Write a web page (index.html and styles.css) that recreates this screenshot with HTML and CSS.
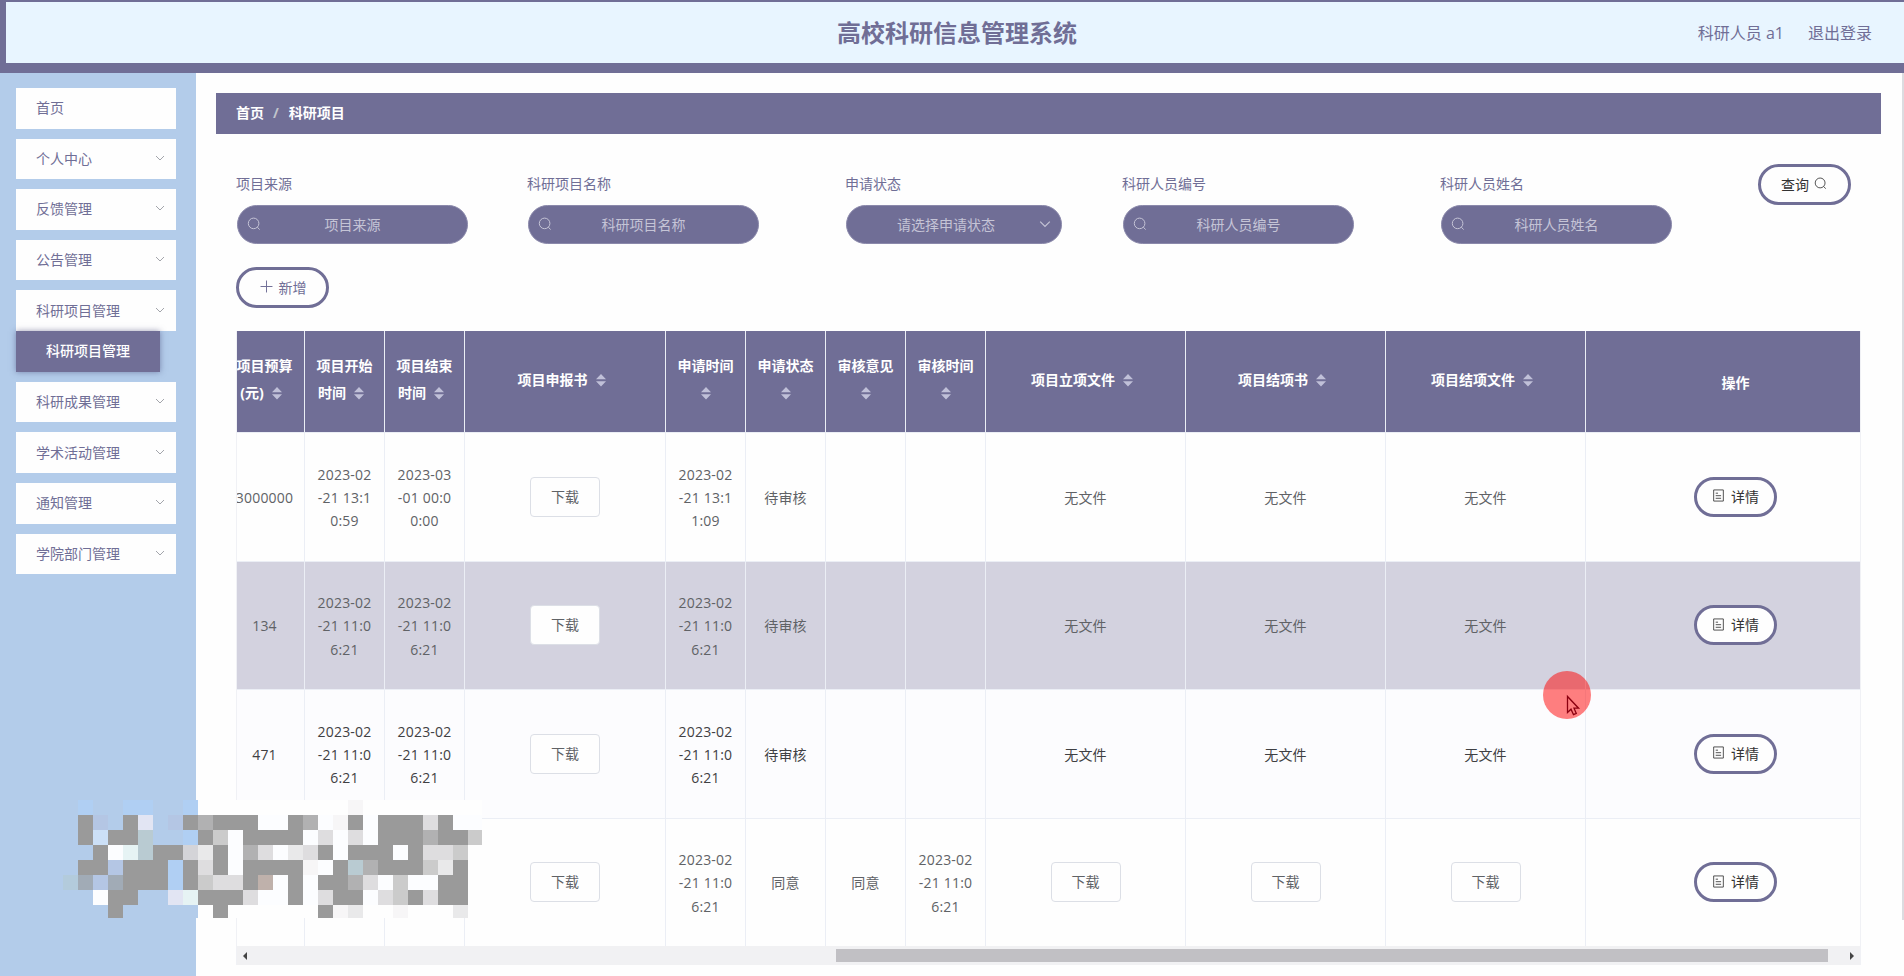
FILE: index.html
```html
<!DOCTYPE html>
<html lang="zh-CN">
<head>
    <meta charset="UTF-8">
    <title>高校科研信息管理系统</title>
    <link rel="stylesheet" href="styles.css">
</head>
<body>
    <!-- icons -->
    <svg class="sprite">
        <symbol id="search" viewBox="0 0 14 14"><circle cx="6.6" cy="6.4" r="5.3"/><path d="M10.4 10.2L12.6 12.6"/></symbol>
        <symbol id="down" viewBox="0 0 10 10"><path d="M1 3L5 7L9 3"/></symbol>
        <symbol id="plus" viewBox="0 0 12 12"><path d="M6 .5V11.5M.5 6H11.5"/></symbol>
        <symbol id="doc" viewBox="0 0 12 14"><path d="M.8 1H11.2V13H.8ZM3 4.5H5.5M3 7.2H8.8M3 10H8.8"/></symbol>
        <symbol id="sort" viewBox="0 0 10 13"><path d="M5 0L10 5.3H0ZM0 7.3H10L5 12.6Z"/></symbol>
    </svg>

    <header class="header">
        <h1 class="title">高校科研信息管理系统</h1>
        <div class="user"><span>科研人员 a1</span><span>退出登录</span></div>
    </header>

    <div class="container">
        <nav class="sidebar">
            <div class="menu-item">首页</div>
            <div class="menu-item">个人中心<svg class="arrow"><use href="#down"/></svg></div>
            <div class="menu-item">反馈管理<svg class="arrow"><use href="#down"/></svg></div>
            <div class="menu-item">公告管理<svg class="arrow"><use href="#down"/></svg></div>
            <div class="menu-item open">科研项目管理<svg class="arrow"><use href="#down"/></svg></div>
            <div class="submenu-item">科研项目管理</div>
            <div class="menu-item">科研成果管理<svg class="arrow"><use href="#down"/></svg></div>
            <div class="menu-item">学术活动管理<svg class="arrow"><use href="#down"/></svg></div>
            <div class="menu-item">通知管理<svg class="arrow"><use href="#down"/></svg></div>
            <div class="menu-item">学院部门管理<svg class="arrow"><use href="#down"/></svg></div>
        </nav>

        <main class="main">
            <div class="breadcrumb"><b>首页</b><span class="slash">/</span><b>科研项目</b></div>

            <div class="filters">
                <div class="field">
                    <label>项目来源</label>
                    <div class="input"><svg class="search"><use href="#search"/></svg>项目来源</div>
                </div>
                <div class="field">
                    <label>科研项目名称</label>
                    <div class="input"><svg class="search"><use href="#search"/></svg>科研项目名称</div>
                </div>
                <div class="field">
                    <label>申请状态</label>
                    <div class="input select">请选择申请状态<svg class="caret"><use href="#down"/></svg></div>
                </div>
                <div class="field">
                    <label>科研人员编号</label>
                    <div class="input"><svg class="search"><use href="#search"/></svg>科研人员编号</div>
                </div>
                <div class="field">
                    <label>科研人员姓名</label>
                    <div class="input"><svg class="search"><use href="#search"/></svg>科研人员姓名</div>
                </div>
                <button class="pill query">查询<svg class="icon"><use href="#search"/></svg></button>
            </div>

            <button class="pill add"><svg class="icon"><use href="#plus"/></svg>新增</button>

            <div class="table-wrap">
                <table class="table">
                    <colgroup>
                        <col class="w80"><col class="w80"><col class="w80"><col class="w201">
                        <col class="w80"><col class="w80"><col class="w80"><col class="w80">
                        <col class="w200"><col class="w200"><col class="w200"><col class="w300">
                    </colgroup>
                    <thead>
                        <tr>
                            <th>项目预算<br>(元)<svg class="sort"><use href="#sort"/></svg></th>
                            <th>项目开始<br>时间<svg class="sort"><use href="#sort"/></svg></th>
                            <th>项目结束<br>时间<svg class="sort"><use href="#sort"/></svg></th>
                            <th>项目申报书<svg class="sort"><use href="#sort"/></svg></th>
                            <th>申请时间<br><svg class="sort alone"><use href="#sort"/></svg></th>
                            <th>申请状态<br><svg class="sort alone"><use href="#sort"/></svg></th>
                            <th>审核意见<br><svg class="sort alone"><use href="#sort"/></svg></th>
                            <th>审核时间<br><svg class="sort alone"><use href="#sort"/></svg></th>
                            <th>项目立项文件<svg class="sort"><use href="#sort"/></svg></th>
                            <th>项目结项书<svg class="sort"><use href="#sort"/></svg></th>
                            <th>项目结项文件<svg class="sort"><use href="#sort"/></svg></th>
                            <th class="action">操作</th>
                        </tr>
                    </thead>
                    <tbody>
                        <tr class="r1">
                            <td>3000000</td>
                            <td>2023-02<br>-21 13:1<br>0:59</td>
                            <td>2023-03<br>-01 00:0<br>0:00</td>
                            <td><button class="download">下载</button></td>
                            <td>2023-02<br>-21 13:1<br>1:09</td>
                            <td>待审核</td>
                            <td></td>
                            <td></td>
                            <td>无文件</td>
                            <td>无文件</td>
                            <td>无文件</td>
                            <td><button class="pill detail"><svg class="icon"><use href="#doc"/></svg>详情</button></td>
                        </tr>
                        <tr class="r2 hover">
                            <td>134</td>
                            <td>2023-02<br>-21 11:0<br>6:21</td>
                            <td>2023-02<br>-21 11:0<br>6:21</td>
                            <td><button class="download">下载</button></td>
                            <td>2023-02<br>-21 11:0<br>6:21</td>
                            <td>待审核</td>
                            <td></td>
                            <td></td>
                            <td>无文件</td>
                            <td>无文件</td>
                            <td>无文件</td>
                            <td><button class="pill detail"><svg class="icon"><use href="#doc"/></svg>详情</button></td>
                        </tr>
                        <tr class="r3">
                            <td>471</td>
                            <td>2023-02<br>-21 11:0<br>6:21</td>
                            <td>2023-02<br>-21 11:0<br>6:21</td>
                            <td><button class="download">下载</button></td>
                            <td>2023-02<br>-21 11:0<br>6:21</td>
                            <td>待审核</td>
                            <td></td>
                            <td></td>
                            <td>无文件</td>
                            <td>无文件</td>
                            <td>无文件</td>
                            <td><button class="pill detail"><svg class="icon"><use href="#doc"/></svg>详情</button></td>
                        </tr>
                        <tr class="r4">
                            <td></td>
                            <td></td>
                            <td></td>
                            <td><button class="download">下载</button></td>
                            <td>2023-02<br>-21 11:0<br>6:21</td>
                            <td>同意</td>
                            <td>同意</td>
                            <td>2023-02<br>-21 11:0<br>6:21</td>
                            <td><button class="download">下载</button></td>
                            <td><button class="download">下载</button></td>
                            <td><button class="download">下载</button></td>
                            <td><button class="pill detail"><svg class="icon"><use href="#doc"/></svg>详情</button></td>
                        </tr>
                    </tbody>
                </table>
                <div class="scrollbar">
                    <svg class="sb-arrow" viewBox="0 0 4 8"><path d="M4 0V8L0 4Z"/></svg>
                    <div class="thumb"></div>
                    <svg class="sb-arrow" viewBox="0 0 4 8"><path d="M0 0V8L4 4Z"/></svg>
                </div>
            </div>
        </main>
        <div class="page-scroll"></div>
    </div>

    <div class="mosaic" id="mosaic"></div>

    <div class="pointer">
        <svg viewBox="0 0 48 48"><path d="M24.5 25.5V41.5L28 38.2L30.5 43.7L33.3 42.4L31 37.2H35.6Z"/></svg>
    </div>

    <script src="mosaic.js"></script>
</body>
</html>
```
FILE: styles.css
```css
* {
    box-sizing: border-box;
}
body {
    margin: 0;
    height: 976px;
    overflow: hidden;
    position: relative;
    background: #fefefe;
    color: #606266;
    font-family: "Open Sans", "Noto Sans CJK SC", sans-serif;
    font-size: 14px;
}
button {
    font-family: inherit;
    font-size: 14px;
    padding: 0 0 2px;
}
svg {
    fill: none;
    stroke: currentColor;
    flex: none;
}
.sprite {
    display: none;
}

/* header */
.header {
    height: 73px;
    border: solid #706e96;
    border-width: 2px 0 10px 6px;
    background: #e8f5ff;
    display: grid;
    grid-template-columns: 1fr auto 1fr;
    align-items: center;
    padding: 0 32px 0 36px;
    color: #706e96;
}
.title {
    grid-column: 2;
    margin: 0;
    font-size: 24px;
    line-height: 36px;
}
.user {
    display: flex;
    justify-content: flex-end;
    gap: 24px;
    padding-bottom: 2px;
    font-size: 16px;
}

.container {
    display: flex;
    height: 903px;
}

/* sidebar */
.sidebar {
    width: 196px;
    padding: 15px 20px 0 16px;
    background: #b3ccea;
    color: #706e96;
}
.menu-item {
    height: 40.6px;
    margin-bottom: 10px;
    padding: 0 11px 2px 20px;
    background: #fefefe;
    display: flex;
    align-items: center;
    justify-content: space-between;
}
.menu-item.open {
    margin-bottom: 0;
}
.arrow {
    width: 10px;
    height: 10px;
    color: #a3a5ab;
}
.submenu-item {
    width: 144px;
    height: 40.6px;
    margin-bottom: 10.2px;
    line-height: 40px;
    text-align: center;
    background: #706e96;
    color: #fff;
    font-weight: 500;
    box-shadow: 0 0 6px rgba(60, 60, 110, .5);
}

/* main */
.main {
    flex: 1;
    min-width: 0;
    padding: 20px 21px 0 20px;
}
.breadcrumb {
    height: 41px;
    padding: 0 0 3px 20px;
    background: #706e96;
    color: #fff;
    display: flex;
    align-items: center;
}
.slash {
    margin: 0 10px 0 9px;
    color: #c0c4cc;
    font-weight: bold;
}
.filters {
    display: grid;
    grid-template-columns: 291px 318px 277px 318px 317px auto;
    padding: 30px 0 0 21px;
    justify-content: start;
    align-items: start;
}
.field label {
    display: block;
    height: 41px;
    margin-left: -1px;
    line-height: 40px;
    color: #706e96;
}
.input {
    width: 231px;
    height: 39px;
    padding-bottom: 1px;
    border: 1px solid #8b89ab;
    border-radius: 20px;
    background: #706e96;
    color: #c5c4d6;
    display: flex;
    align-items: center;
    justify-content: center;
}
.input .search {
    width: 14px;
    height: 14px;
    margin: 0 auto 0 9px;
}
.input:not(.select)::after {
    content: "";
    width: 23px;
    margin-left: auto;
}
.select {
    width: 216px;
}
.caret {
    width: 12px;
    height: 12px;
    margin: 0 10px 0 auto;
}
.select::before {
    content: "";
    width: 6px;
    margin-right: auto;
}
.pill {
    height: 41px;
    border: 3px solid #706e96;
    border-radius: 21px;
    background: #fefefe;
    display: flex;
    align-items: center;
    justify-content: center;
    gap: 6px;
    color: #333;
}
.icon {
    width: 13px;
    height: 13px;
    stroke-width: .9;
}
.query {
    width: 93px;
    gap: 5px;
    padding-right: 1px;
}
.add {
    width: 93px;
    margin: 23px 0 0 20px;
    padding-left: 1px;
    color: #706e96;
}
.detail {
    width: 83px;
    height: 40px;
    margin: 0 auto;
}

/* table */
.table-wrap {
    width: 1625px;
    margin: 23px 0 0 20px;
    overflow: hidden;
    border: solid #f0f1f5;
    border-width: 0 1px;
}
.table {
    width: 1661px;
    margin-left: -12px;
    table-layout: fixed;
    border-collapse: separate;
    border-spacing: 0;
    text-align: center;
}
.w80 { width: 80px; }
.w200 { width: 200px; }
.w201 { width: 201px; }
.w300 { width: 300px; }
.table th {
    height: 102px;
    padding: 0 0 5px;
    background: #706e96;
    color: #fff;
    line-height: 27px;
    border-right: 1px solid #ebeef5;
    border-bottom: 1px solid #ebeef5;
}
.table th.action {
    padding: 1px 0 0;
}
.sort {
    width: 10px;
    height: 13px;
    margin: 0 7px 0 8px;
    vertical-align: -2px;
    fill: #c0c0d8;
    stroke: none;
}
.sort.alone {
    margin: 0;
}
.table td {
    padding: 1px 0 0;
    line-height: 23.3px;
    letter-spacing: .2px;
    border-right: 1px solid #ebeef5;
    border-bottom: 1px solid #ebeef5;
}
.table td:has(button) {
    padding: 0 0 1px;
}
.r1 td,
.r3 td {
    height: 129px;
}
.r2 td {
    height: 128px;
}
.r4 td {
    height: 127px;
    border-bottom: none;
}
.hover td {
    background: #d3d2df;
}
.r3 td {
    background: #fcfcfe;
    color: #3f4043;
}
.download {
    width: 70px;
    height: 40px;
    border: 1px solid #dcdfe6;
    border-radius: 4px;
    background: #fefefe;
    color: #606266;
}
.scrollbar {
    height: 19px;
    padding: 0 6px;
    background: #f1f1f3;
    display: flex;
    align-items: center;
    justify-content: space-between;
}
.sb-arrow {
    width: 4px;
    height: 8px;
    fill: #444;
    stroke: none;
}
.thumb {
    width: 992px;
    height: 13px;
    margin: 0 22px 0 auto;
    background: #c1c0c4;
}
.page-scroll {
    width: 2px;
    height: 847px;
    background: #dcdce0;
}

/* pixelated block over the lower left corner */
.mosaic {
    position: absolute;
    left: 63px;
    top: 800px;
    display: grid;
    grid-template-columns: repeat(27, 15px) 14px;
    grid-template-rows: repeat(7, 15px) 13px;
}
.m-sky { background: #b3ccea; }
.m-paper { background: #fefefe; }
.m-G { background: #9a9a9a; }
.m-g { background: #b1b1b2; }
.m-s { background: #cbcbcb; }
.m-d { background: #d4d4d8; }
.m-l { background: #dedddf; }
.m-e { background: #e9e9ea; }
.m-f { background: #f7f6f7; }
.m-w { background: #fcfdff; }
.m-b { background: #b0cff3; }
.m-c { background: #cce0f7; }
.m-v { background: #b4c6e4; }
.m-t { background: #b9cbd2; }
.m-p { background: #e2e5f3; }
.m-n { background: #e6f3f4; }
.m-a { background: #b3cbdc; }
.m-h { background: #a1abb6; }
.m-r { background: #bfb1ab; }

/* mouse highlight */
.pointer {
    position: absolute;
    left: 1543px;
    top: 671px;
    width: 48px;
    height: 48px;
    border-radius: 50%;
    background: rgba(255, 0, 0, .5);
    color: #8b0010;
}
.pointer svg {
    display: block;
    stroke-width: 1.3;
}
```
FILE: mosaic.js
```js
// one letter per cell, dots keep the colour of the page underneath
const rows = [
    '.b..bb..b..........f........',
    '.Gv.Gp.vGgGGGwwGgwfGwGGGlGww',
    '.GcGGt..bGswGGGGwlwlwGGGgGGs',
    '..GwntGGdeGwglwelGwGGGwGlls.',
    '.GGvGGGbGlGwGGGGfwGtgGGGseG.',
    'ahvhGGGbGsllGrwGwGGglwswwGG.',
    '..wGG..pnGGGlwwGwlGGwlsGlGG.',
    '...G......G......Gfe..f...e.'
];
const mosaic = document.getElementById('mosaic');

rows.forEach(row => {
    row.split('').forEach((letter, i) => {
        const cell = document.createElement('div');
        if (letter === '.') {
            cell.className = i < 9 ? 'm-sky' : 'm-paper';
        } else {
            cell.className = 'm-' + letter;
        }
        mosaic.appendChild(cell);
    });
});
```
